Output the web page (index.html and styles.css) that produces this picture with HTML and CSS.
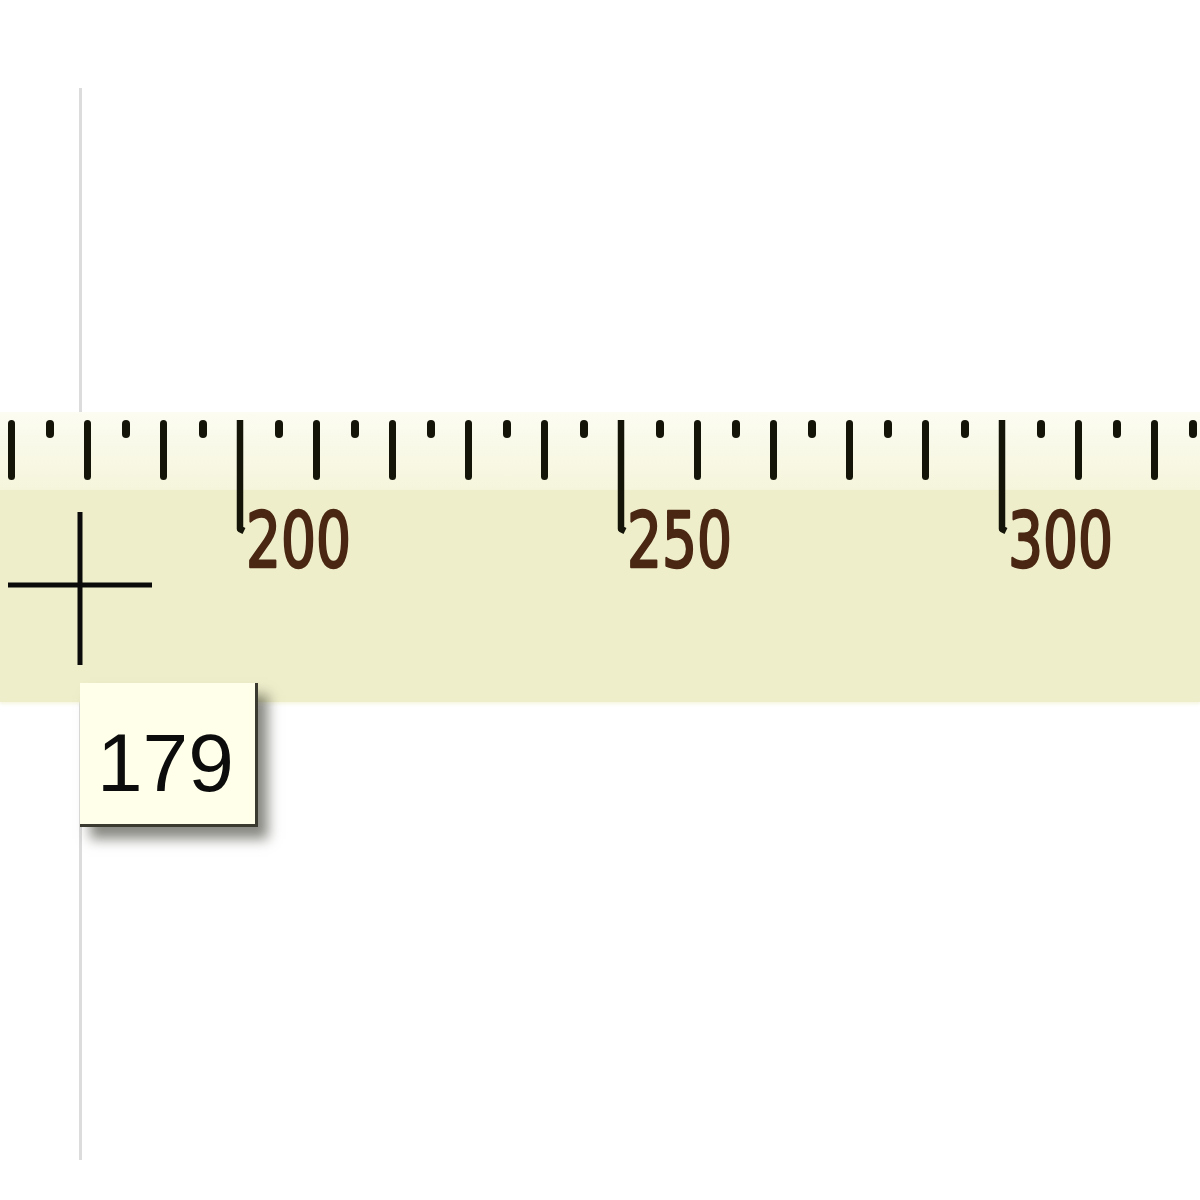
FILE: index.html
```html
<!DOCTYPE html>
<html>
<head>
<meta charset="utf-8">
<link rel="stylesheet" href="styles.css">
</head>
<body>
<div class="stage">
  <div class="cursor-line"></div>
  <div class="ruler">
    <div class="tick-zone"></div>
    <div class="band"></div>
    <svg class="ruler-svg" width="1200" height="290" viewBox="0 0 1200 290">
      <g class="ticks">
        <rect x="8" y="8" width="7" height="60" rx="3.5"/>
        <rect x="46" y="8" width="8" height="18" rx="4"/>
        <rect x="84" y="8" width="7" height="60" rx="3.5"/>
        <rect x="122" y="8" width="8" height="18" rx="4"/>
        <rect x="160" y="8" width="7" height="60" rx="3.5"/>
        <rect x="199" y="8" width="8" height="18" rx="4"/>
        <path class="long" d="M240 8 V117 L244 119"/>
        <rect x="275" y="8" width="8" height="18" rx="4"/>
        <rect x="313" y="8" width="7" height="60" rx="3.5"/>
        <rect x="351" y="8" width="8" height="18" rx="4"/>
        <rect x="389" y="8" width="7" height="60" rx="3.5"/>
        <rect x="427" y="8" width="8" height="18" rx="4"/>
        <rect x="465" y="8" width="7" height="60" rx="3.5"/>
        <rect x="503" y="8" width="8" height="18" rx="4"/>
        <rect x="541" y="8" width="7" height="60" rx="3.5"/>
        <rect x="580" y="8" width="8" height="18" rx="4"/>
        <path class="long" d="M621 8 V117 L625 119"/>
        <rect x="656" y="8" width="8" height="18" rx="4"/>
        <rect x="694" y="8" width="7" height="60" rx="3.5"/>
        <rect x="732" y="8" width="8" height="18" rx="4"/>
        <rect x="770" y="8" width="7" height="60" rx="3.5"/>
        <rect x="808" y="8" width="8" height="18" rx="4"/>
        <rect x="846" y="8" width="7" height="60" rx="3.5"/>
        <rect x="884" y="8" width="8" height="18" rx="4"/>
        <rect x="922" y="8" width="7" height="60" rx="3.5"/>
        <rect x="961" y="8" width="8" height="18" rx="4"/>
        <path class="long" d="M1002 8 V117 L1006 119"/>
        <rect x="1037" y="8" width="8" height="18" rx="4"/>
        <rect x="1075" y="8" width="7" height="60" rx="3.5"/>
        <rect x="1113" y="8" width="8" height="18" rx="4"/>
        <rect x="1151" y="8" width="7" height="60" rx="3.5"/>
        <rect x="1189" y="8" width="8" height="18" rx="4"/>
      </g>
      <g class="labels">
        <text x="246" y="155" textLength="105" lengthAdjust="spacingAndGlyphs">200</text>
        <text x="627" y="155" textLength="105" lengthAdjust="spacingAndGlyphs">250</text>
        <text x="1008" y="155" textLength="105" lengthAdjust="spacingAndGlyphs">300</text>
      </g>
      <g class="crosshair">
        <path d="M80 100 V253 M8 173 H152"/>
      </g>
    </svg>
  </div>
  <div class="tip">179</div>
</div>
</body>
</html>
```

FILE: styles.css
```css
html, body {
  margin: 0;
  padding: 0;
  background: #ffffff;
}

.stage {
  position: relative;
  width: 1200px;
  height: 1200px;
  overflow: hidden;
  padding-top: 412px;
  box-sizing: border-box;
}

.cursor-line {
  position: absolute;
  left: 79px;
  top: 88px;
  width: 3px;
  height: 1072px;
  background: #dcdcdc;
}

.ruler {
  position: relative;
  height: 290px;
  display: flex;
  flex-direction: column;
}

.tick-zone {
  height: 78px;
  background: linear-gradient(#fcfcf2, #f5f5dc);
}

.band {
  flex: 1;
  background: #eeeecb;
  box-shadow: 0 2px 3px rgba(238, 238, 203, 0.6);
}

.ruler-svg {
  position: absolute;
  left: 0;
  top: 0;
}

.ticks rect {
  fill: #141408;
}

.ticks .long {
  fill: none;
  stroke: #141408;
  stroke-width: 6.5;
  stroke-linejoin: round;
}

.labels text {
  font-family: "DejaVu Sans", sans-serif;
  font-size: 76px;
  fill: #4a2712;
  stroke: #4a2712;
  stroke-width: 2.5px;
  stroke-linejoin: round;
}

.crosshair path {
  fill: none;
  stroke: #0a0a0a;
  stroke-width: 5;
}

.tip {
  position: absolute;
  left: 80px;
  top: 683px;
  width: 158px;
  height: 102px;
  padding-left: 17px;
  padding-top: 39px;
  background: #ffffea;
  border-right: 3px solid #3a3a30;
  border-bottom: 3px solid #3a3a30;
  box-shadow: 10px 12px 12px rgba(40, 40, 30, 0.55);
  font-family: "Liberation Sans", Arial, sans-serif;
  font-size: 82px;
  line-height: 1;
  color: #0c0c0c;
  display: flex;
  align-items: flex-start;
}
```
